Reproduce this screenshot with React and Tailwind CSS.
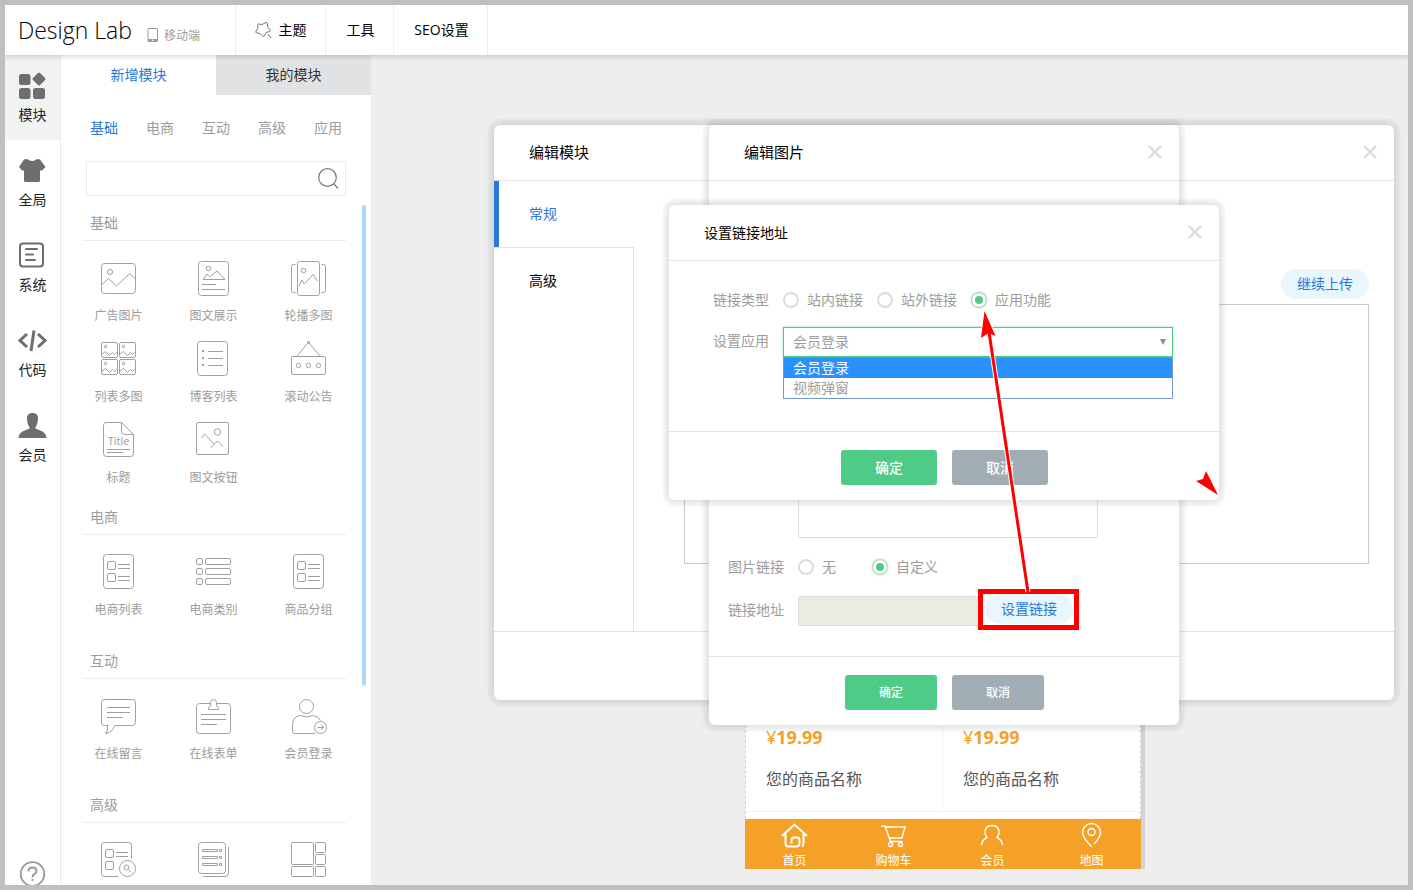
import { useState } from 'react';

const CATEGORIES = ['基础', '电商', '互动', '高级', '应用'];

const photo = (x, y) => (
  <g key={`${x}-${y}`}>
    <rect x={x} y={y} width="16" height="15" rx="1.5" />
    <circle cx={x + 4} cy={y + 4} r="1.3" />
    <path d={`M${x} ${y + 12}l4-3 4 4 3-3 2 2 2-2`} />
  </g>
);

const listCard = (
  <>
    <rect x="3.5" y="0.5" width="30" height="34" rx="3" />
    <rect x="7.5" y="7.5" width="8" height="8" rx="1.5" />
    <rect x="7.5" y="19.5" width="8" height="8" rx="1.5" />
    <path d="M18 10.5h12M18 14.5h12M18 22.5h12M18 26.5h12" />
  </>
);

const SECTIONS = [
  {
    title: '基础',
    spacing: 'mb-[13px]',
    items: [
      {
        label: '广告图片',
        icon: (
          <>
            <rect x="1.5" y="3.5" width="34" height="30" rx="3" />
            <circle cx="10" cy="12" r="2.6" />
            <path d="M1.5 25l7-6.5 8 7.5 13-12.5 6 5.5" />
          </>
        ),
      },
      {
        label: '图文展示',
        icon: (
          <>
            <rect x="3.5" y="1.5" width="30" height="34" rx="3" />
            <circle cx="13.5" cy="8.5" r="2.3" />
            <path d="M8 19.5l4-5.5 2.5 2.5 7.5-5.5 8 8.5zM7 24.5h14M7 29.5h23" />
          </>
        ),
      },
      {
        label: '轮播多图',
        icon: (
          <>
            <rect x="7.5" y="1.5" width="22" height="34" rx="2" />
            <path d="M5.5 4.5h-2a2 2 0 0 0-2 2v24a2 2 0 0 0 2 2h2M31.5 4.5h2a2 2 0 0 1 2 2v24a2 2 0 0 1-2 2h-2" />
            <circle cx="13.5" cy="10.5" r="2.2" />
            <path d="M9 26l2.7-6 2.6 4 8.7-9.5 4.5 6.5" />
          </>
        ),
      },
      {
        label: '列表多图',
        icon: (
          <>
            {photo(1.5, 1.5)}
            {photo(19.5, 1.5)}
            {photo(1.5, 18.5)}
            {photo(19.5, 18.5)}
          </>
        ),
      },
      {
        label: '博客列表',
        icon: (
          <>
            <rect x="2.5" y="0.5" width="30" height="34" rx="3" />
            <path d="M13 10.5h15M13 17.5h15M13 24.5h15" />
            <path d="M7 10h2M7 17h2M7 24h2" strokeWidth="2" />
          </>
        ),
      },
      {
        label: '滚动公告',
        icon: (
          <>
            <rect x="1.5" y="15.5" width="34" height="18" rx="1.5" />
            <path d="M6.5 15.5L18.5 1.5l12 14" />
            <circle cx="18.5" cy="1.2" r="1" />
            <circle cx="8.5" cy="24.5" r="2.2" />
            <circle cx="18.5" cy="24.5" r="2.2" />
            <circle cx="28.5" cy="24.5" r="2.2" />
          </>
        ),
      },
      {
        label: '标题',
        icon: (
          <>
            <path d="M21.5.5h-15a3 3 0 0 0-3 3v28a3 3 0 0 0 3 3h24a3 3 0 0 0 3-3v-19zM21.5.5v9a3 3 0 0 0 3 3h9" />
            <text x="18.5" y="23" fontSize="11" textAnchor="middle" fill="#9c9c9c" stroke="none">Title</text>
            <path d="M7 27.5h23M7 30.5h16" />
          </>
        ),
      },
      {
        label: '图文按钮',
        icon: (
          <>
            <rect x="1.5" y="0.5" width="32" height="32" rx="1.5" />
            <circle cx="22.5" cy="10" r="3.2" />
            <path d="M6.5 16l3-4 9.5 10M15.5 26l7-7 5.5 5.5" />
          </>
        ),
      },
    ],
  },
  {
    title: '电商',
    spacing: 'mb-[25px]',
    items: [
      { label: '电商列表', icon: listCard },
      {
        label: '电商类别',
        icon: (
          <>
            <rect x="1.5" y="4.5" width="6" height="6" rx="1.5" />
            <rect x="1.5" y="14.5" width="6" height="6" rx="1.5" />
            <rect x="1.5" y="24.5" width="6" height="6" rx="1.5" />
            <rect x="10.5" y="4.5" width="25" height="6" rx="1.5" />
            <rect x="10.5" y="14.5" width="25" height="6" rx="1.5" />
            <rect x="10.5" y="24.5" width="25" height="6" rx="1.5" />
          </>
        ),
      },
      { label: '商品分组', icon: listCard },
    ],
  },
  {
    title: '互动',
    spacing: 'mb-[25px]',
    items: [
      {
        label: '在线留言',
        icon: (
          <>
            <path d="M8.5 27.5h-4a3 3 0 0 1-3-3v-20a3 3 0 0 1 3-3h28a3 3 0 0 1 3 3v20a3 3 0 0 1-3 3h-18q-2 7-9 8 3-3 2-8" />
            <path d="M7 9.5h23M7 14.5h23M7 19.5h16" />
          </>
        ),
      },
      {
        label: '在线表单',
        icon: (
          <>
            <path d="M15.5 5.5h-11a3 3 0 0 0-3 3v24a3 3 0 0 0 3 3h28a3 3 0 0 0 3-3v-24a3 3 0 0 0-3-3h-11" />
            <path d="M15.5 7.5v-3a3 3 0 0 1 6 0v3q0 1.5 2 2v2h-10v-2q2-.5 2-2z" />
            <path d="M6 16.5h25M6 21.5h25M6 26.5h16" />
          </>
        ),
      },
      {
        label: '会员登录',
        icon: (
          <>
            <circle cx="16.5" cy="8.5" r="7" />
            <path d="M25 35.5H4.5q-2 0-2-2v-7q0-8 8-9 6 3 12 0 6 .5 8 5" />
            <circle cx="30.5" cy="29.5" r="6" />
            <path d="M27.5 29.5h6M31 27l2.5 2.5L31 32" />
          </>
        ),
      },
    ],
  },
  {
    title: '高级',
    spacing: 'mb-0',
    iconsOnly: true,
    items: [
      {
        label: '产品搜索',
        icon: (
          <>
            <path d="M18 34.5H4.5a3 3 0 0 1-3-3v-28a3 3 0 0 1 3-3h24a3 3 0 0 1 3 3v13" />
            <rect x="5.5" y="7.5" width="8" height="8" rx="1.5" />
            <rect x="5.5" y="19.5" width="8" height="8" rx="1.5" />
            <path d="M16 10.5h12M16 14.5h12" />
            <circle cx="27.5" cy="26.5" r="8" />
            <circle cx="26.5" cy="25.5" r="2.5" />
            <path d="M28.5 27.5l3 3" />
          </>
        ),
      },
      {
        label: '文章列表',
        icon: (
          <>
            <rect x="3.5" y="0.5" width="27" height="31" rx="3" />
            <path d="M33.5 5v26q0 3.5-3.5 3.5H8" />
            <path d="M7.5 7.5h15v2h-15zM7.5 14.5h15v2h-15zM7.5 21.5h15v2h-15zM24.5 7.5h2v2h-2zM24.5 14.5h2v2h-2zM24.5 21.5h2v2h-2z" />
          </>
        ),
      },
      {
        label: '图片橱窗',
        icon: (
          <>
            <rect x="1.5" y="0.5" width="22" height="22" rx="1" />
            <rect x="1.5" y="24.5" width="22" height="10" rx="1" />
            <rect x="25.5" y="0.5" width="10" height="10" rx="1" />
            <rect x="25.5" y="12.5" width="10" height="10" rx="1" />
            <rect x="25.5" y="24.5" width="10" height="10" rx="1" />
          </>
        ),
      },
    ],
  },
];

const SIDEBAR = [
  {
    label: '模块',
    icon: (
      <>
        <rect x="1" y="3" width="11.5" height="11" rx="2.5" />
        <rect x="1" y="17" width="11.5" height="11" rx="2.5" />
        <rect x="15" y="17" width="12" height="11" rx="2.5" />
        <rect x="16" y="3" width="10" height="10" rx="1.5" transform="rotate(45 21 8)" />
      </>
    ),
  },
  {
    label: '全局',
    icon: <path d="M9 3q5.5 4 10 0l3 .5L27.5 11l-4 4-1.5-1v10.5q0 1.5-1.5 1.5h-13Q6 26 6 24.5V14l-1.5 1L1 11l5-7.5z" />,
  },
  {
    label: '系统',
    icon: (
      <g fill="none" stroke="#6e6e6e" strokeWidth="2" strokeLinecap="round">
        <rect x="2" y="2.5" width="23" height="23" rx="3" />
        <path d="M8 8h11M8 13.5h7M8 19h9" />
      </g>
    ),
  },
  {
    label: '代码',
    icon: (
      <g fill="none" stroke="#6e6e6e" strokeWidth="3">
        <path d="M9 8L2 14.5 9 21M20 8l7 6.5L20 21M16 4.5L13 25" />
      </g>
    ),
  },
  {
    label: '会员',
    icon: <path d="M14.5 2c4 0 6 2.5 5.5 6.5-.4 3.5-1 6-2.5 7.5v1.5C22 19.5 28 20.5 28.5 27H.5C1 20.5 7 19.5 11.5 17.5V16C10 14.5 9.4 12 9 8.5 8.5 4.5 10.5 2 14.5 2z" />,
  },
];

const PREVIEW_NAV = [
  {
    label: '首页',
    icon: (
      <path
        strokeWidth="2"
        d="M1 14L13.5 2.5 26 14M4.5 12v9.5q0 3 3 3H15q3.5 0 3.5-3.5V18q0-2.5-2.5-2.5h-3q-2.5 0-2.5 2.5v3.5M22.5 12v9q0 2.5-1.5 3.5"
      />
    ),
  },
  {
    label: '购物车',
    icon: (
      <>
        <path d="M1 4h4l5.5 15.5h12M5.5 5H25l-3 11H9.5" />
        <circle cx="10.5" cy="22.5" r="2" />
        <circle cx="20.5" cy="22.5" r="2" />
      </>
    ),
  },
  {
    label: '会员',
    icon: <path d="M2.5 23q.5-5 5.5-7.5C4 10 6 3.5 13 3.5S22 10 18 15.5q5 2.5 5.5 7.5" />,
  },
  {
    label: '地图',
    icon: (
      <>
        <path d="M13.5 24.5C7 18 4.5 14 4.5 10.5a9 9 0 0 1 18 0c0 3.5-2.5 7.5-6.5 11.5" />
        <circle cx="13.5" cy="10" r="3.5" />
      </>
    ),
  },
];

function Header() {
  return (
    <header className="relative z-10 flex h-[50px] shrink-0 bg-white text-sm text-black shadow-[0_5px_0_rgba(0,0,0,0.04),0_1px_3px_rgba(0,0,0,0.12)]">
      <div className="flex w-[231px] items-center border-r border-[#e6f1f9] pl-[13px]">
        <h1 className="font-['Open_Sans'] text-[23px] leading-[50px] font-light">Design Lab</h1>
        <a href="#mobile" className="mt-[11px] ml-[15px] flex items-center gap-[5px] text-xs text-[#9c9c9c]">
          <svg width="12" height="15" viewBox="0 0 12 15" aria-hidden="true">
            <rect x="1" y="0.5" width="9.5" height="13" rx="0.5" fill="none" stroke="#9c9c9c" />
            <path d="M1 11h9.5v3H1z" fill="#9c9c9c" />
            <circle cx="5.7" cy="12.3" r="0.8" fill="#fff" />
          </svg>
          移动端
        </a>
      </div>
      <nav className="flex">
        <button className="flex w-[90px] items-center justify-center gap-[6px] border-r border-[#e6f1f9]">
          <svg width="18" height="18" viewBox="0 0 18 18" fill="none" stroke="#777" aria-hidden="true">
            <path d="M3.5 3L7 3.5 11 1.5q1.4-.4 1.5 1L12.7 6l2.6 3q.4 1-.6 1.4L11 11.5l-1.5 3.6q-.7 1-1.6.2L5 12.5l-3.8-.8q-1-.5-.3-1.4L3 7 2.6 3.8q.1-.8.9-.8zM12.5 13l4 4" />
          </svg>
          主题
        </button>
        <button className="w-[68px] border-r border-[#e6f1f9] pl-[2px]">工具</button>
        <button className="w-[94px] border-r border-[#e6f1f9] pl-[2px]">SEO设置</button>
      </nav>
    </header>
  );
}

function Sidebar() {
  return (
    <nav className="flex w-[56px] shrink-0 flex-col overflow-hidden border-r border-[#e9eaea] bg-white">
      {SIDEBAR.map((item, i) => (
        <button
          key={item.label}
          className={`flex h-[85px] shrink-0 flex-col items-center gap-[6px] pt-4 text-sm text-[#222] ${i === 0 ? 'bg-[#f1f3f3]' : ''}`}
        >
          <svg width="29" height="28" viewBox="0 0 29 28" fill="#6e6e6e" aria-hidden="true">{item.icon}</svg>
          {item.label}
        </button>
      ))}
      <button aria-label="帮助" className="-mb-[2px] mt-auto self-center">
        <svg width="27" height="26" viewBox="0 0 27 26" fill="none" stroke="#999" strokeWidth="2">
          <circle cx="13.5" cy="13" r="11.8" strokeWidth="1.8" />
          <path d="M9.5 10.5q0-4 4-4t4 3.5q0 2-2 3t-2 3.5M13.5 18v2" />
        </svg>
      </button>
    </nav>
  );
}

function ModulePanel() {
  return (
    <aside className="flex w-[310px] shrink-0 flex-col overflow-hidden bg-white">
      <div className="flex h-10 shrink-0 text-sm">
        <button className="flex-1 text-[#2878d8]">新增模块</button>
        <button className="flex-1 bg-[#e1e2e4] text-[#333]">我的模块</button>
      </div>
      <div className="flex h-[66px] shrink-0 items-center gap-7 pl-[29px] text-sm">
        {CATEGORIES.map((name, i) => (
          <button key={name} className={i === 0 ? 'text-[#2878d8]' : 'text-[#9c9c9c]'}>{name}</button>
        ))}
      </div>
      <form className="mx-[25px] flex h-[35px] shrink-0 items-center border border-[#ebebeb]">
        <input type="text" aria-label="搜索模块" className="h-full min-w-0 flex-1 px-2 text-sm outline-none" />
        <button type="button" aria-label="搜索" className="mr-[6px]">
          <svg width="22" height="22" viewBox="0 0 22 22" fill="none" stroke="#777" strokeWidth="1.2">
            <circle cx="10.5" cy="9.5" r="8.8" />
            <path d="M17 16l4 4.5" />
          </svg>
        </button>
      </form>
      <div className="mt-[9px] flex min-h-0 flex-1 gap-4 overflow-hidden pr-[5px] pl-[21px]">
        <div className="flex-1">
          {SECTIONS.map((section) => (
            <section key={section.title} className={section.spacing}>
              <h2 className="h-9 border-b border-[#ebebeb] pl-2 text-sm leading-9 text-[#9c9c9c]">{section.title}</h2>
              <div className="-mr-[10px] -ml-[11px] grid grid-cols-3 gap-y-[17px] pt-[19px]">
                {section.items.map((item) => (
                  <button
                    key={item.label}
                    aria-label={item.label}
                    className="flex flex-col items-center gap-3 text-xs text-[#9c9c9c]"
                  >
                    <svg width="37" height="36" viewBox="0 0 37 36" fill="none" stroke="#a0a0a0" aria-hidden="true">{item.icon}</svg>
                    {!section.iconsOnly && item.label}
                  </button>
                ))}
              </div>
            </section>
          ))}
        </div>
        <div className="h-[481px] w-1 shrink-0 rounded-full bg-[#add8fd]" />
      </div>
    </aside>
  );
}

function Preview() {
  return (
    <div className="w-[400px] border-r-4 border-[#d2d3d5] bg-white">
      <div className="grid grid-cols-2 border-x border-dashed border-[#d0d0d0] pb-[7px]">
        {[0, 1].map((i) => (
          <div key={i} className={`border-b border-[#f3f3f3] pb-5 pl-5 ${i === 0 ? 'border-r' : ''}`}>
            <p className="font-['Noto_Sans'] text-lg leading-6 text-[#f5a128]">
              ¥<b>19.99</b>
            </p>
            <p className="mt-[18px] text-base text-[#555]">您的商品名称</p>
          </div>
        ))}
      </div>
      <nav className="grid h-[50px] grid-cols-4 bg-[#f5a128] text-xs text-white">
        {PREVIEW_NAV.map((item) => (
          <a key={item.label} href="#preview" className="flex flex-col items-center pt-[3px]">
            <svg width="27" height="27" viewBox="0 0 27 27" fill="none" stroke="#fff" strokeWidth="1.4" aria-hidden="true">{item.icon}</svg>
            <span className="mt-1">{item.label}</span>
          </a>
        ))}
      </nav>
    </div>
  );
}

function Modal({ title, titleClass, className, children }) {
  return (
    <section
      className={`absolute left-1/2 flex -translate-x-1/2 flex-col rounded-md bg-white shadow-[0_0_0_6px_rgba(120,130,130,0.06),0_0_8px_rgba(50,60,80,0.22)] ${className}`}
    >
      <div className="flex h-14 shrink-0 items-center justify-between border-b border-[#e1e2e4] pr-[17px] pl-[35px] text-black">
        <h2 className={titleClass}>{title}</h2>
        <button aria-label="关闭" className="mb-[2px]">
          <svg width="14" height="14" viewBox="0 0 14 14" fill="none" stroke="#dcdde1" strokeWidth="2.4" strokeLinecap="round">
            <path d="M1.5 1.5l11 11M12.5 1.5l-11 11" />
          </svg>
        </button>
      </div>
      {children}
    </section>
  );
}

function ModalFooter({ buttonClass }) {
  return (
    <div className="flex justify-center gap-[15px] border-t border-[#e1e2e4] pt-[18px] pb-[15px] pl-px text-white">
      <button className={`h-[35px] rounded-[3px] bg-[#4dcb87] font-medium ${buttonClass}`}>确定</button>
      <button className={`h-[35px] rounded-[3px] bg-[#a1adb5] font-medium ${buttonClass}`}>取消</button>
    </div>
  );
}

function Radio({ name, label, checked, onChange }) {
  return (
    <label className="flex items-center gap-2">
      <input
        type="radio"
        name={name}
        checked={checked}
        onChange={onChange}
        className="size-4 appearance-none rounded-full border-2 border-[#dcdcdc] bg-white checked:border checked:border-[#ccd5d0] checked:bg-[#4dcb87] checked:shadow-[inset_0_0_0_3px_#fff,0_0_3px_rgba(77,203,135,0.5)]"
      />
      {label}
    </label>
  );
}

function ModuleModal() {
  return (
    <Modal title="编辑模块" titleClass="text-[15px]" className="top-[70px] h-[575px] w-[900px]">
      <div className="flex flex-1">
        <div className="flex w-[140px] flex-col text-left text-sm">
          <button className="h-[66px] border-l-[5px] border-[#2878d8] pl-[30px] text-left text-[#2878d8]">常规</button>
          <div className="flex-1 border-t border-r border-[#e1e2e4]">
            <button className="h-[66px] pl-[35px] text-black">高级</button>
          </div>
        </div>
        <div className="flex flex-1 flex-col items-end pt-[88px] pr-[25px] pl-[50px]">
          <button className="h-[30px] w-[88px] rounded-full bg-[#e9f6fe] text-sm text-[#2878d8]">继续上传</button>
          <div className="mt-[5px] h-[260px] w-full border border-[#c8c9cb]" />
        </div>
      </div>
      <div className="h-[69px] border-t border-[#e1e2e4]" />
    </Modal>
  );
}

function ImageModal() {
  const [linkMode, setLinkMode] = useState('custom');
  return (
    <Modal title="编辑图片" titleClass="text-[15px]" className="top-[70px] h-[600px] w-[470px]">
      <div className="flex flex-1 flex-col justify-end pb-[30px] pl-[19px] text-sm text-[#9c9c9c]">
        <textarea
          aria-label="图片描述"
          className="mb-[14px] ml-[70px] h-[120px] w-[300px] resize-none rounded-[3px] border border-[#dcdde0] bg-white"
        />
        <div className="mb-3 flex h-[30px] items-center">
          <span className="w-[70px]">图片链接</span>
          <div className="flex gap-9">
            <Radio name="image-link" label="无" checked={linkMode === 'none'} onChange={() => setLinkMode('none')} />
            <Radio name="image-link" label="自定义" checked={linkMode === 'custom'} onChange={() => setLinkMode('custom')} />
          </div>
        </div>
        <div className="flex h-8">
          <label htmlFor="link-url" className="w-[70px] leading-8">链接地址</label>
          <input id="link-url" type="text" disabled className="h-[30px] w-[182px] self-end rounded-[3px] border border-[#dcdde0] bg-[#ebebe4]" />
          <div className="relative ml-[5px] h-[30px]">
            <button className="h-[30px] w-[88px] rounded-full bg-[#e9f6fe] text-[#2878d8]">设置链接</button>
            <div className="pointer-events-none absolute -top-[5px] -right-[6px] -bottom-[6px] -left-[7px] border-[5px] border-[#f00]" />
          </div>
        </div>
      </div>
      <ModalFooter buttonClass="w-[92px] text-xs" />
    </Modal>
  );
}

function LinkModal() {
  const [type, setType] = useState('应用功能');
  const [app, setApp] = useState('会员登录');
  return (
    <Modal title="设置链接地址" titleClass="text-sm" className="top-[150px] w-[550px]">
      <div className="flex flex-col gap-3 pt-6 pb-[74px] pl-[44px] text-sm text-[#9c9c9c]">
        <div className="flex h-[30px] items-center">
          <span className="w-[70px]">链接类型</span>
          <div className="flex gap-[14px]">
            {['站内链接', '站外链接', '应用功能'].map((name) => (
              <Radio key={name} name="link-type" label={name} checked={type === name} onChange={() => setType(name)} />
            ))}
          </div>
        </div>
        <div className="flex h-[30px]">
          <label htmlFor="link-app" className="w-[70px] leading-7">设置应用</label>
          <div className="relative w-[390px]">
            <select
              id="link-app"
              value={app}
              onChange={(e) => setApp(e.target.value)}
              className="h-[30px] w-full appearance-none border border-[#4dcb87] bg-white pl-[9px] shadow-[0_0_3px_rgba(77,203,135,0.5)] outline-none"
            >
              <option>会员登录</option>
              <option>视频弹窗</option>
            </select>
            <svg className="pointer-events-none absolute top-3 right-[7px]" width="6" height="6" viewBox="0 0 6 6" aria-hidden="true">
              <path d="M0 0h6L3 6z" fill="#8c8c8c" />
            </svg>
            <ul role="listbox" className="absolute top-full w-full border border-[#7397d3] bg-white leading-5">
              <li role="option" aria-selected="true" className="bg-[#2990fd] pl-[9px] text-white">会员登录</li>
              <li role="option" aria-selected="false" className="pl-[9px]">视频弹窗</li>
            </ul>
          </div>
        </div>
      </div>
      <ModalFooter buttonClass="w-24 text-sm" />
    </Modal>
  );
}

function Arrows() {
  return (
    <svg
      className="pointer-events-none absolute top-[150px] left-1/2 -translate-x-1/2"
      width="550"
      height="390"
      viewBox="0 0 550 390"
      aria-hidden="true"
    >
      <g fill="#f00" stroke="#fff" strokeWidth="1.5" paintOrder="stroke">
        <path d="M320 127L359 387" strokeWidth="5" />
        <path d="M315.5 106l11 25-7-3-7.5 5z" />
        <path d="M549 290l-12-24-3 8-7 2z" />
      </g>
      <path d="M320 127L359 387" stroke="#f00" strokeWidth="3" />
    </svg>
  );
}

export default function App() {
  return (
    <div className="flex h-screen flex-col overflow-hidden border-[5px] border-[#bfbfbf] bg-[#eee] font-['Open_Sans','Noto_Sans_CJK_SC',sans-serif]">
      <Header />
      <div className="flex min-h-0 flex-1">
        <Sidebar />
        <ModulePanel />
        <main className="relative flex flex-1 items-end justify-center overflow-hidden pb-4 pl-[111px]">
          <Preview />
          <div className="absolute inset-y-0 right-0 left-[109px]">
            <ModuleModal />
            <ImageModal />
            <LinkModal />
            <Arrows />
          </div>
        </main>
      </div>
    </div>
  );
}
